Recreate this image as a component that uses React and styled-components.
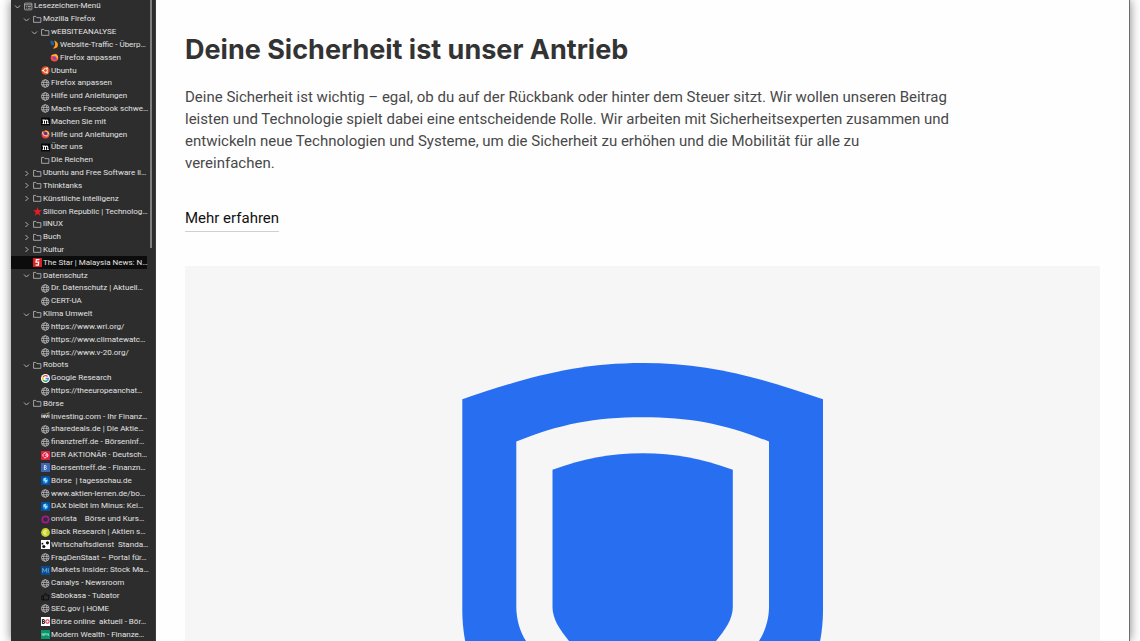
import React from "react";
import styled, { createGlobalStyle } from "styled-components";

const Global = createGlobalStyle`
  *, *::before, *::after { box-sizing: border-box; }
  html, body, #root { height: 100%; }
  body { margin: 0; background: #fff; overflow: hidden; }
`;

const Desktop = styled.div`
  height: 100%;
  padding: 0 10px 0 11px;
  background: #fff;
`;

const Window = styled.div`
  display: flex;
  height: 100%;
  background: #fefefe;
  border-right: 1px solid #6c6c6c;
  box-shadow: 0 0 10px rgba(0, 0, 0, 0.5);
`;

const Sidebar = styled.nav`
  position: relative;
  flex: none;
  width: 145px;
  height: 100%;
  background: #2d2d2d;
  border-right: 1px solid #3c3c3c;
`;

const Scrollbar = styled.div`
  position: absolute;
  top: 0;
  right: 3px;
  width: 2px;
  height: 248px;
  background: #808080;
`;

const Tree = styled.ul`
  display: grid;
  grid-auto-rows: minmax(0, 1fr);
  height: 100%;
  margin: 0;
  padding: 0;
  list-style: none;
`;

const Item = styled.li`
  display: flex;
  min-width: 0;
  margin-right: 8px;
  background: ${(p) => (p.$selected ? "#0c0c0c" : "transparent")};
`;

const Entry = styled.a`
  display: flex;
  flex: 1;
  align-items: center;
  min-width: 0;
  margin: 0;
  padding: 0 0 0 ${(p) => Math.round(p.$level * 8.6) + 3}px;
  border: 0;
  background: none;
  color: #e2e2e2;
  font: 400 8px/12px Roboto, "Noto Sans", sans-serif;
  text-align: left;
  text-decoration: none;
  white-space: pre;
`;

const Chevron = styled.svg`
  flex: none;
  width: 7px;
  height: 7px;
  margin-right: 3px;
  fill: none;
  stroke: ${(p) => (p.$shown ? "#b4b4b4" : "none")};
  stroke-width: 1;
`;

const Glyph = styled.svg`
  flex: none;
  width: 9px;
  height: 9px;
  margin-right: 1px;
`;

const Page = styled.main`
  flex: 1;
  min-width: 0;
  padding: 30px 29px 0 29px;
  overflow: hidden;
  font-family: Roboto, "Liberation Sans", sans-serif;
`;

const Title = styled.h1`
  margin: 0;
  color: #333;
  font: 700 27px/40px Inter, "Liberation Sans", sans-serif;
  white-space: nowrap;
`;

const Lead = styled.p`
  margin: 16px 0 0;
  color: #484848;
  font-size: 15px;
  line-height: 22px;
`;

const More = styled.a`
  display: inline-block;
  margin: 32px 0 34px;
  padding-bottom: 1px;
  border-bottom: 1px solid #d0d0d0;
  color: #111;
  font-size: 15px;
  line-height: 24px;
  text-decoration: none;
`;

const Illustration = styled.svg`
  display: block;
  width: 100%;
  height: auto;
  background: #f6f6f6;
`;

const glyphs = {
  menu: (
    <g fill="none" stroke="#c4c4c4" strokeWidth="1.3">
      <rect x="1" y="2" width="13" height="12" rx="1" />
      <path d="M1 5H14M3.5 8H5M6.5 8H12M3.5 11H5M6.5 11H12" />
    </g>
  ),
  folder: <path d="M1 13V2.5H5L7 4.7H14V13Z" fill="none" stroke="#c0c0c0" strokeWidth="1.4" />,
  globe: (
    <g fill="none" stroke="#c0c0c0" strokeWidth="1.4">
      <circle cx="7.6" cy="8" r="6.7" />
      <ellipse cx="7.6" cy="8" rx="3" ry="6.7" />
      <path d="M1.1 6H14.1M1.1 10.2H14.1" />
    </g>
  ),
  traffic: (
    <g>
      <path d="M1 1C5 1 8 4 7 8C6 11 3 10 1 6Z" fill="#1d5fa5" />
      <path d="M7 1C12 2 15 6 14 10C13 14 9 15 5 15C9 12 11 7 7 1Z" fill="#ff9f1a" />
    </g>
  ),
  firefox: (
    <g>
      <circle cx="8" cy="8.5" r="6.8" fill="#ff4b35" />
      <path d="M8 1C13 3 15 7 14 10C12 7 11 5 8 1Z" fill="#ffcf35" />
      <path d="M2 4C5 7 11 4 13 11C15 8 14 5 11 2L6 3Z" fill="#ffb62e" />
      <circle cx="8" cy="8.8" r="3.2" fill="#8147d8" />
    </g>
  ),
  ubuntu: (
    <g>
      <circle cx="8" cy="8" r="7.5" fill="#e65220" />
      <circle cx="8" cy="8" r="3.4" fill="none" stroke="#fff" strokeWidth="1.7" />
      <g fill="#fff"><circle cx="3.3" cy="8" r="1.4" /><circle cx="10.7" cy="3.8" r="1.4" /><circle cx="10.7" cy="12.2" r="1.4" /></g>
    </g>
  ),
  mozilla: (
    <g>
      <rect y="1" width="16" height="14" fill="#070707" />
      <path d="M2.5 5.2H4.5V11.5M4.5 7C6 4.5 8 5 8 7V11.5M8 7C9.5 4.5 12 5 12 7V11.5M2.8 11.5H6M7 11.5H9.4M10.8 11.5H13.8" fill="none" stroke="#fff" strokeWidth="1.8" />
    </g>
  ),
  quantum: (
    <g>
      <circle cx="8" cy="8" r="7" fill="#e94335" />
      <path d="M7 1A7 7 0 0 1 15 8L9 8Z" fill="#ffc33c" />
      <circle cx="8.5" cy="6" r="3" fill="#5b2ca0" />
      <path d="M3 3C2 9 7 12 13 10" fill="none" stroke="#f2ebe6" strokeWidth="1.6" />
    </g>
  ),
  star: <path d="M8 0L10 5.7H16L11.2 9.3L13 15.5L8 11.8L3 15.5L4.8 9.3L0 5.7H6Z" fill="#ed1c24" />,
  thestar: (
    <g>
      <rect width="16" height="16" fill="#dd2025" />
      <path d="M11.5 3H6L5.4 7.5H10L9.5 12.5H4.5" fill="none" stroke="#fff" strokeWidth="2.2" />
    </g>
  ),
  google: (
    <g fill="none" strokeWidth="2.4">
      <circle cx="8" cy="8" r="8" fill="#fff" />
      <path d="M3.8 5.5A5 5 0 0 1 11.8 4.5" stroke="#ea4335" />
      <path d="M3.8 5.5A5 5 0 0 0 3.8 10.5" stroke="#fbbc05" />
      <path d="M3.8 10.5A5 5 0 0 0 11.2 11.8" stroke="#34a853" />
      <path d="M11.2 11.8A5 5 0 0 0 13 8H8" stroke="#4285f4" />
    </g>
  ),
  investing: (
    <g>
      <rect y="2" width="16" height="9" fill="#4a4a4a" />
      <path d="M1.5 5V10M4 10V6L6.5 10V5M8 5L10 10L12 5M14 5V10" fill="none" stroke="#f0f0f0" strokeWidth="1.5" />
      <path d="M10 3L15 1" stroke="#e7b52c" strokeWidth="1.5" />
    </g>
  ),
  aktionaer: (
    <g>
      <rect width="16" height="16" rx="1" fill="#e41e3c" />
      <path d="M4 10A4.5 4.5 0 1 1 11 11M5 12C8 13 11 11 11 7M7 8L11 6" fill="none" stroke="#fff" strokeWidth="1.5" />
    </g>
  ),
  boersentreff: (
    <g>
      <rect width="16" height="16" fill="#3f66b3" />
      <path d="M6 4V12M6 4.5H8.5Q10.5 6 8.5 7.8H6M8.5 7.8Q11 10 8.5 11.5H6" fill="none" stroke="#fff" strokeWidth="1.3" />
    </g>
  ),
  tagesschau: (
    <g>
      <rect width="16" height="16" rx="1" fill="#064f9e" />
      <ellipse cx="8" cy="8" rx="5" ry="5.5" fill="#1f8fe0" />
      <path d="M5 4L9 3L8 7L12 7L8 13L7 9L4 8Z" fill="#a8e0fb" />
    </g>
  ),
  onvista: <circle cx="8" cy="8" r="5.7" fill="none" stroke="#a91893" strokeWidth="3" />,
  black: (
    <g>
      <circle cx="8" cy="8" r="7.8" fill="#c9cf27" />
      <path d="M10.5 4.5A4 4 0 1 0 10.5 11.5M5 7H10M5 9H9" fill="none" stroke="#f8f8d3" strokeWidth="1.4" />
    </g>
  ),
  wirtschaft: (
    <g>
      <rect width="16" height="16" fill="#fff" />
      <g fill="#111"><circle cx="11.5" cy="5" r="2.8" /><circle cx="5" cy="11.5" r="2.8" /><rect x="1" y="5" width="3" height="3" /></g>
    </g>
  ),
  markets: (
    <g>
      <rect width="16" height="16" fill="#084b8c" />
      <path d="M3 12V4L6.5 10L10 4V12M13 4V12" fill="none" stroke="#78aee2" strokeWidth="1.4" />
    </g>
  ),
  thumb: <path d="M1.5 7H4.5V14H1.5ZM4.5 7L8 2Q10 2 9 6H14.5L13 14H4.5" fill="none" stroke="#0c0c0c" strokeWidth="1.6" />,
  online: (
    <g>
      <rect width="16" height="16" fill="#fff" />
      <path d="M2.5 4V12M2.5 4.5H5Q7 6 5 8H2.5M5 8Q7.5 10 5 11.5H2.5" fill="none" stroke="#222" strokeWidth="1.8" />
      <circle cx="11.5" cy="8" r="3" fill="none" stroke="#e3263a" strokeWidth="1.8" />
    </g>
  ),
  wealth: (
    <g>
      <rect width="16" height="16" fill="#079669" />
      <path d="M2 10V6L4.5 10V6M6.5 10V6H9M6.5 8H8.5M10.5 10V6L13.5 10V6" fill="none" stroke="#c8f5e3" strokeWidth="1" />
    </g>
  ),
};

// [level, icon, label, state]: folders are "open" or "closed"
const rows = [
  [0, "menu", "Lesezeichen-Menü", "open"],
  [1, "folder", "Mozilla Firefox", "open"],
  [2, "folder", "wEBSITEANALYSE", "open"],
  [3, "traffic", "Website-Traffic - Überp…"],
  [3, "firefox", "Firefox anpassen"],
  [2, "ubuntu", "Ubuntu"],
  [2, "globe", "Firefox anpassen"],
  [2, "globe", "Hilfe und Anleitungen"],
  [2, "globe", "Mach es Facebook schwe…"],
  [2, "mozilla", "Machen Sie mit"],
  [2, "quantum", "Hilfe und Anleitungen"],
  [2, "mozilla", "Über uns"],
  [2, "folder", "Die Reichen"],
  [1, "folder", "Ubuntu and Free Software li…", "closed"],
  [1, "folder", "Thinktanks", "closed"],
  [1, "folder", "Künstliche Intelligenz", "closed"],
  [1, "star", "Silicon Republic | Technolog…"],
  [1, "folder", "lINUX", "closed"],
  [1, "folder", "Buch", "closed"],
  [1, "folder", "Kultur", "closed"],
  [1, "thestar", "The Star | Malaysia News: N…", "selected"],
  [1, "folder", "Datenschutz", "open"],
  [2, "globe", "Dr. Datenschutz | Aktuell…"],
  [2, "globe", "CERT-UA"],
  [1, "folder", "Klima Umwelt", "open"],
  [2, "globe", "https://www.wri.org/"],
  [2, "globe", "https://www.climatewatc…"],
  [2, "globe", "https://www.v-20.org/"],
  [1, "folder", "Robots", "open"],
  [2, "google", "Google Research"],
  [2, "globe", "https://theeuropeanchat…"],
  [1, "folder", "Börse", "open"],
  [2, "investing", "Investing.com - Ihr Finanz…"],
  [2, "globe", "sharedeals.de | Die Aktie…"],
  [2, "globe", "finanztreff.de - Börseninf…"],
  [2, "aktionaer", "DER AKTIONÄR - Deutsch…"],
  [2, "boersentreff", "Boersentreff.de - Finanzn…"],
  [2, "tagesschau", "Börse  | tagesschau.de"],
  [2, "globe", "www.aktien-lernen.de/bo…"],
  [2, "tagesschau", "DAX bleibt im Minus: Kei…"],
  [2, "onvista", "onvista    Börse und Kurs…"],
  [2, "black", "Black Research | Aktien s…"],
  [2, "wirtschaft", "Wirtschaftsdienst  Standa…"],
  [2, "globe", "FragDenStaat – Portal für…"],
  [2, "markets", "Markets Insider: Stock Ma…"],
  [2, "globe", "Canalys - Newsroom"],
  [2, "thumb", "Sabokasa - Tubator"],
  [2, "globe", "SEC.gov | HOME"],
  [2, "online", "Börse online  aktuell - Bör…"],
  [2, "wealth", "Modern Wealth - Finanze…"],
];

function BookmarkRow({ level, icon, label, state }) {
  const folder = icon === "folder" || icon === "menu";
  const hasChildren = state === "open" || state === "closed";
  const control = folder
    ? { as: "button", type: "button", "aria-expanded": state === "open" }
    : { href: "#" };
  return (
    <Item $selected={state === "selected"}>
      <Entry $level={level} {...control}>
        <Chevron viewBox="0 0 7 7" $shown={hasChildren} aria-hidden="true">
          <path d={state === "open" ? "M1 2.5L3.5 5L6 2.5" : "M2.5 1L5 3.5L2.5 6"} />
        </Chevron>
        <Glyph viewBox="0 0 16 16" aria-hidden="true">{glyphs[icon]}</Glyph>
        {label}
      </Entry>
    </Item>
  );
}

export default function App() {
  return (
    <>
      <Global />
      <Desktop>
        <Window>
          <Sidebar aria-label="Lesezeichen">
            <Tree>
              {rows.map(([level, icon, label, state], i) => (
                <BookmarkRow key={i} level={level} icon={icon} label={label} state={state} />
              ))}
            </Tree>
            <Scrollbar />
          </Sidebar>
          <Page>
            <Title>Deine Sicherheit ist unser Antrieb</Title>
            <Lead>
              Deine Sicherheit ist wichtig – egal, ob du auf der Rückbank oder hinter dem Steuer sitzt. Wir wollen unseren Beitrag
              <br />
              leisten und Technologie spielt dabei eine entscheidende Rolle. Wir arbeiten mit Sicherheitsexperten zusammen und
              <br />
              entwickeln neue Technologien und Systeme, um die Sicherheit zu erhöhen und die Mobilität für alle zu
              <br />
              vereinfachen.
            </Lead>
            <More href="#">Mehr erfahren</More>
            <Illustration viewBox="0 0 915 610" role="img" aria-label="Schutzschild">
              <path
                fill="#276ef1"
                d="M277.3 133.3C340 112 390 97 457.7 97S575 112 638 133.3V344C638 440 560 500 457.7 520C355 500 277.3 440 277.3 344Z"
              />
              <path
                fill="#f6f6f6"
                d="M331.3 175.6C375 158 410 151.3 457.7 151.3S540 158 584 175.6V341C584 353 580 366 574 375C550 420 510 450 457.7 466C405 450 365 420 341 375C335 366 331.3 353 331.3 341Z"
              />
              <path
                fill="#276ef1"
                d="M367.5 203.7C400 192.5 425 187.3 457.7 187.3S515 192.5 547.8 203.7V341C547.8 353 540 364 531 375C510 398 487 415 457.7 428C428 415 405 398 384 375C375 364 367.5 353 367.5 341Z"
              />
            </Illustration>
          </Page>
        </Window>
      </Desktop>
    </>
  );
}
